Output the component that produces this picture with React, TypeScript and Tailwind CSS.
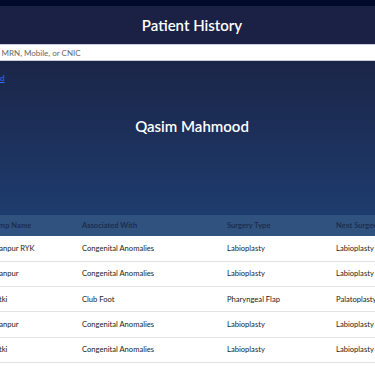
import React from "react";

const rows = [
  ["Khanpur RYK", "Congenital Anomalies", "Labioplasty", "Labioplasty"],
  ["Khanpur", "Congenital Anomalies", "Labioplasty", "Labioplasty"],
  ["Kotki", "Club Foot", "Pharyngeal Flap", "Palatoplasty"],
  ["Khanpur", "Congenital Anomalies", "Labioplasty", "Labioplasty"],
  ["Kotki", "Congenital Anomalies", "Labioplasty", "Labioplasty"],
];

export default function App() {
  return (
    <div
      className="w-[375px] h-[366px] overflow-hidden bg-white"
      style={{ fontFamily: 'Lato, "Open Sans", sans-serif' }}
    >
      <div className="w-[540px] -ml-[78px]">
        <div className="h-[6px] bg-[#010a2b]" />
        <div className="h-[38px] bg-[#1b2145] flex items-center justify-center">
          <h1 className="text-[15px] font-semibold text-white leading-none">Patient History</h1>
        </div>
        <div className="h-[17px] bg-white border-y border-[#c9cce0] flex items-center pl-[19px]">
          <span className="text-[8px] text-[#666] leading-none">Search by Name, MRN, Mobile, or CNIC</span>
        </div>
        <div className="h-[154px] bg-gradient-to-b from-[#1b2548] to-[#1d3c6e] flex flex-col">
          <div className="pt-[13px] pl-[16px] flex">
            <a className="text-[8px] text-[#3b6cf0] underline leading-[8px]">Back to Dashboard</a>
          </div>
          <div className="flex-1 flex items-center justify-center pb-[44px]">
            <h2 className="text-[15px] font-semibold text-white leading-none">Qasim Mahmood</h2>
          </div>
        </div>
        <table className="ml-[43px] border-collapse text-left" style={{ tableLayout: "fixed" }}>
          <thead>
            <tr className="bg-[#30527f] h-[21px]">
              <th className="w-[105px] pl-[25px] pr-[12px] text-[7.6px] font-semibold text-[#1c2a47] whitespace-nowrap">Camp Name</th>
              <th className="w-[145px] px-[12px] text-[7.6px] font-semibold text-[#1c2a47]">Associated With</th>
              <th className="w-[109px] px-[12px] text-[7.6px] font-semibold text-[#1c2a47]">Surgery Type</th>
              <th className="w-[130px] px-[12px] text-[7.6px] font-semibold text-[#1c2a47] whitespace-nowrap">Next Surgery</th>
            </tr>
          </thead>
          <tbody>
            {rows.map((r, i) => (
              <tr key={i} className="h-[25.3px] border-b border-[#e3e3e3]">
                {r.map((c, j) => (
                  <td
                    key={j}
                    className={`${j === 0 ? "pl-[25px] pr-[12px]" : "px-[12px]"} text-[7.6px] text-[#222] whitespace-nowrap`}
                  >
                    {c}
                  </td>
                ))}
              </tr>
            ))}
          </tbody>
        </table>
      </div>
    </div>
  );
}
